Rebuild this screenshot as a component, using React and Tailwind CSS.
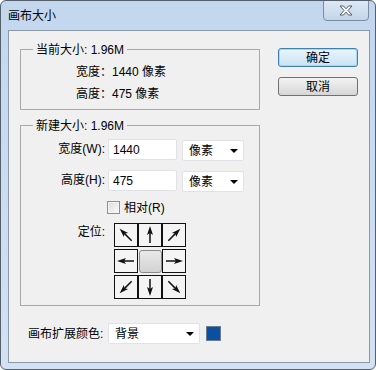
const font = "font-['Liberation_Sans','Noto_Sans_CJK_SC',sans-serif]";

function Arrow({ deg }) {
  return (
    <svg width="22" height="22" viewBox="0 0 22 22" style={{ transform: `rotate(${deg}deg)` }}>
      <line x1="3" y1="11" x2="14" y2="11" stroke="#111" strokeWidth="1.5" />
      <path d="M11 8 L20 11 L11 14 L13 11 Z" fill="#111" />
    </svg>
  );
}

function Select({ value, w }) {
  return (
    <div
      className={`flex h-[21px] items-center justify-between rounded-[2px] border border-[#e1e2e8] bg-white pl-[6px] pr-[5px] ${w}`}
    >
      <span>{value}</span>
      <span className="h-0 w-0 border-x-[4px] border-t-[4px] border-x-transparent border-t-black" />
    </div>
  );
}

function Group({ title, className, children }) {
  return (
    <div className={`relative w-[240px] border border-[#a9a9a9] ${className}`}>
      <span className="absolute -top-[8px] left-[12px] bg-[#f0f0f0] px-[3px] leading-[16px]">{title}</span>
      {children}
    </div>
  );
}

function Button({ label, primary }) {
  return (
    <div
      className={`flex h-[19px] w-[80px] items-center justify-center rounded-[3px] border ${
        primary
          ? 'border-[#3c7fb1] bg-gradient-to-b from-[#eaf6fd] to-[#c8e2f3] shadow-[0_0_0_1px_#a6d8f4_inset]'
          : 'border-[#707070] bg-gradient-to-b from-[#f3f3f3] to-[#d6d6d6]'
      }`}
    >
      {label}
    </div>
  );
}

const anchors = [
  [225, 270, 315],
  [180, null, 0],
  [135, 90, 45],
];

export default function App() {
  return (
    <div
      className={`${font} h-[370px] w-[376px] overflow-hidden rounded-[6px] border border-[#55606c] bg-gradient-to-b from-[#c2d7ee] to-[#d3e2f3] text-[12px] text-black`}
    >
      <div className="flex h-[29px] items-start justify-between">
        <span className="pl-[7px] pt-[7px] leading-[16px]">画布大小</span>
        <div className="mr-[6px] -mt-[1px] flex h-[21px] w-[46px] items-center justify-center rounded-b-[4px] border border-[#7a8ca2] bg-gradient-to-b from-[#dde8f4] to-[#c4d5e9]">
          <svg width="14" height="11" viewBox="0 0 14 11">
            <path
              d="M1 1 H4.5 L7 3.8 L9.5 1 H13 L9 5.5 L13 10 H9.5 L7 7.2 L4.5 10 H1 L5 5.5 Z"
              fill="#fff"
              stroke="#4f5e70"
              strokeWidth="1"
              strokeLinejoin="round"
            />
          </svg>
        </div>
      </div>

      <div className="ml-[7px] h-[333px] w-[362px] border border-[#8d99a6] bg-[#f0f0f0]">
        <div className="flex">
          <div className="ml-[11px] mt-[18px]">
            <Group title="当前大小: 1.96M" className="h-[61px]">
              <div className="pl-[55px] pt-[14px] leading-[16px]">
                <div>宽度：1440 像素</div>
                <div className="mt-[6px]">高度：475 像素</div>
              </div>
            </Group>

            <Group title="新建大小: 1.96M" className="mt-[15px] h-[181px]">
              <div className="pt-[13px]">
                <div className="flex items-start">
                  <span className="w-[84px] pt-[2px] text-right leading-[16px]">宽度(W):</span>
                  <div className="ml-[3px] flex h-[21px] w-[69px] items-center rounded-[2px] border border-[#e1e2e8] bg-white pl-[4px]">
                    1440
                  </div>
                  <div className="ml-[5px] mt-[1px]">
                    <Select value="像素" w="w-[62px]" />
                  </div>
                </div>
                <div className="mt-[9px] flex items-start">
                  <span className="w-[84px] pt-[2px] text-right leading-[16px]">高度(H):</span>
                  <div className="ml-[3px] flex h-[21px] w-[69px] items-center rounded-[2px] border border-[#e1e2e8] bg-white pl-[4px]">
                    475
                  </div>
                  <div className="ml-[5px] mt-[1px]">
                    <Select value="像素" w="w-[62px]" />
                  </div>
                </div>
                <div className="ml-[86px] mt-[9px] flex h-[13px] items-center">
                  <span className="h-[13px] w-[13px] border border-[#8e8f8f] bg-gradient-to-br from-[#dcdcdc] to-[#fbfbfb] shadow-[inset_0_0_0_1px_#f4f4f4]" />
                  <span className="ml-[4px] leading-[16px]">相对(R)</span>
                </div>
                <div className="mt-[9px] flex items-start">
                  <span className="w-[84px] pt-[1px] text-right leading-[16px]">定位:</span>
                  <div className="ml-[9px] flex flex-col gap-[2px]">
                    {anchors.map((row, ri) => (
                      <div key={ri} className="flex">
                        {row.map((deg, ci) =>
                          deg === null ? (
                            <div key={ci} className="flex h-[24px] w-[24px] items-center justify-center">
                              <div className="h-[23px] w-[23px] rounded-[3px] border border-[#8a8a8a] bg-gradient-to-b from-[#e9e9e9] to-[#d2d2d2]" />
                            </div>
                          ) : (
                            <div
                              key={ci}
                              className="flex h-[24px] w-[24px] items-center justify-center border border-[#111] bg-[#f4f4f4]"
                            >
                              <Arrow deg={deg} />
                            </div>
                          ),
                        )}
                      </div>
                    ))}
                  </div>
                </div>
              </div>
            </Group>
          </div>

          <div className="ml-[18px] mt-[17px] flex flex-col gap-[10px]">
            <Button label="确定" primary />
            <Button label="取消" />
          </div>
        </div>

        <div className="ml-[19px] mt-[17px] flex items-center">
          <span className="w-[80px] leading-[16px]">画布扩展颜色:</span>
          <Select value="背景" w="w-[92px]" />
          <span className="ml-[6px] h-[15px] w-[15px] border border-[#6d7d90] bg-[#0b4fa3]" />
        </div>
      </div>
    </div>
  );
}
